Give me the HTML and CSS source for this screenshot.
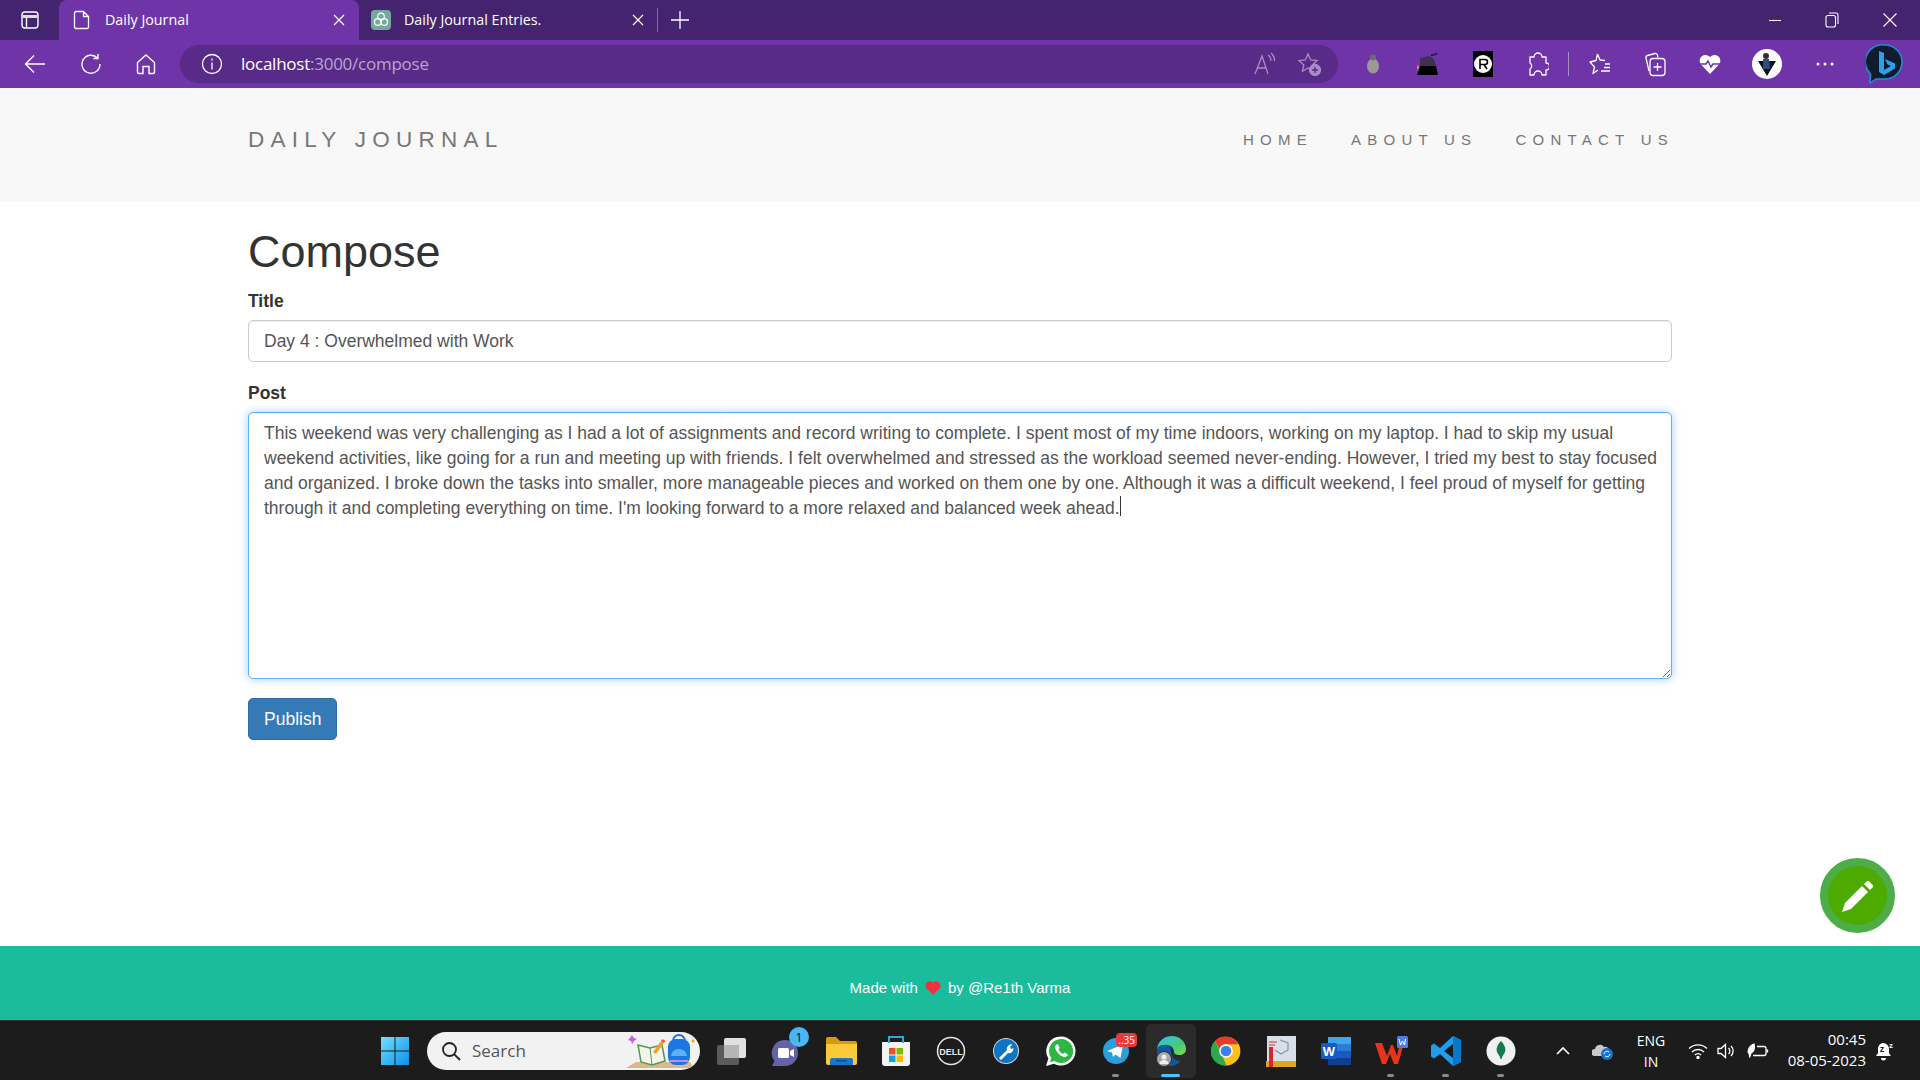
FILE: index.html
```html
<!DOCTYPE html>
<html lang="en">
<head>
    <meta charset="UTF-8">
    <meta name="viewport" content="width=device-width, initial-scale=1.0">
    <title>Daily Journal</title>
    <link rel="stylesheet" href="styles.css">
</head>
<body>
    <div class="tabstrip">
        <div class="strip-btn">
            <svg width="20" height="20" viewBox="0 0 20 20" fill="none" stroke="#fff" stroke-width="1.4"><rect x="2" y="2" width="16" height="16" rx="3"/><path d="M2.5 6.5h15" stroke-width="3" stroke="#ddd"/><path d="M6.5 7v10.5"/></svg>
        </div>
        <div class="tab tab-active">
            <svg class="tab-icon" width="18" height="20" viewBox="0 0 18 20" fill="none" stroke="#fff" stroke-width="1.3"><path d="M3 1.5h7.5L15.5 6.5V17a1.5 1.5 0 0 1-1.500 1.500H3A1.500 1.500 0 0 1 1.500 17V3A1.500 1.500 0 0 1 3 1.500zM10.500 1.500V6.500H15.500"/></svg>
            <span class="tab-title">Daily Journal</span>
            <svg class="tab-close" width="12" height="12" viewBox="0 0 12 12" stroke="#fff" stroke-width="1.200"><path d="M1 1l10 10M11 1L1 11"/></svg>
        </div>
        <div class="tab">
            <svg class="tab-icon" width="20" height="20" viewBox="0 0 20 20" fill="none"><rect width="20" height="20" rx="4" fill="#74aa9c"/><g stroke="#fff" stroke-width="1.200"><circle cx="10" cy="6.500" r="3.300"/><circle cx="6.800" cy="12" r="3.300"/><circle cx="13.200" cy="12" r="3.300"/></g></svg>
            <span class="tab-title">Daily Journal Entries.</span>
            <svg class="tab-close" width="12" height="12" viewBox="0 0 12 12" stroke="#fff" stroke-width="1.200"><path d="M1 1l10 10M11 1L1 11"/></svg>
        </div>
        <div class="tab-sep"></div>
        <svg class="new-tab" width="18" height="18" viewBox="0 0 18 18" stroke="#fff" stroke-width="1.300"><path d="M9 0v18M0 9h18"/></svg>
        <div class="win-controls">
            <svg width="14" height="14" viewBox="0 0 14 14" stroke="#fff" stroke-width="1.100"><path d="M1 7.500h12"/></svg>
            <svg width="14" height="16" viewBox="0 0 14 16" fill="none" stroke="#fff" stroke-width="1.100"><rect x="1" y="3.500" width="9.500" height="11.500" rx="2"/><path d="M4 1h7a2 2 0 0 1 2 2v9"/></svg>
            <svg width="16" height="16" viewBox="0 0 16 16" stroke="#fff" stroke-width="1.100"><path d="M1.500 1.500l13 13M14.500 1.500l-13 13"/></svg>
        </div>
    </div>

    <div class="toolbar">
        <div class="tool-nav">
            <svg width="22" height="20" viewBox="0 0 22 20" fill="none" stroke="#fff" stroke-width="1.400"><path d="M21 10H2M10 1.500L1.500 10l8.500 8.500"/></svg>
            <svg width="22" height="22" viewBox="0 0 22 22" fill="none" stroke="#fff" stroke-width="1.400"><path d="M17.500 5A9 9 0 1 0 20 11M18 1v4.500h-4.500"/></svg>
            <svg width="22" height="22" viewBox="0 0 22 22" fill="none" stroke="#fff" stroke-width="1.400"><path d="M11 2l8.500 7.500V19a1.500 1.500 0 0 1-1.500 1.500h-4v-7H8v7H4A1.500 1.500 0 0 1 2.500 19V9.500z"/></svg>
        </div>
        <div class="urlbar">
            <svg width="22" height="22" viewBox="0 0 22 22" fill="none" stroke="#fff" stroke-width="1.300"><circle cx="11" cy="11" r="9.500"/><path d="M11 9.500v7M11 5.500v2"/></svg>
            <span class="url"><b>localhost</b>:3000/compose</span>
            <svg class="url-read" width="24" height="24" viewBox="0 0 24 24" fill="none" stroke="#a98cc6" stroke-width="1.300"><path d="M3 22L10 4l6 18M5.500 16h9M16 3a7 7 0 0 1 3 6M19 1a10 10 0 0 1 3.500 8"/></svg>
            <svg class="url-fav" width="24" height="24" viewBox="0 0 24 24" fill="none" stroke="#a98cc6" stroke-width="1.300"><path d="M10 2l2.600 6 6.400.6-4.800 4.300 1.400 6.300L10 16l-5.600 3.200 1.400-6.300L1 8.600 7.400 8z"/><circle cx="17" cy="18" r="5.500" fill="#a98cc6"/><path d="M17 15v6M14 18h6" stroke="#572b87"/></svg>
        </div>
        <div class="ext-icons">
            <div class="ext-slot">
                <svg width="16" height="22" viewBox="0 0 16 22"><ellipse cx="8" cy="13" ry="7.500" rx="6" fill="#9a9a9a"/><circle cx="8" cy="4.500" r="3" fill="#6d6d6d"/></svg>
            </div>
            <div class="ext-slot">
                <svg width="22" height="26" viewBox="0 0 22 26"><path d="M2 15h17l2 9H0l2-5z" fill="#000"/><path d="M3 7l9-2 5 3 2 7H3z" fill="#3c3250"/><path d="M0 14l3 2-3 3z" fill="#f08a1d"/><path d="M14 4q3 1 6-2" stroke="#1c1c1c" stroke-width="1.500" fill="none"/></svg>
            </div>
            <div class="ext-slot">
                <svg width="20" height="26" viewBox="0 0 20 26"><rect width="20" height="26" fill="#000"/><circle cx="10" cy="13" r="9" fill="#fff"/><path d="M7 18V8.500h5a2.500 2.500 0 0 1 0 5H7M11 13.500l3 4.500" fill="none" stroke="#000" stroke-width="1.600"/></svg>
            </div>
            <div class="ext-slot">
                <svg width="22" height="26" viewBox="0 0 22 26" fill="none" stroke="#fff" stroke-width="1.300"><path d="M3 6h4a4 4 0 1 1 8 0h4v6a3.500 3.500 0 1 1 0 7v5H15a4 4 0 0 0-8 0H3v-6a3.500 3.500 0 0 0 0-6z" stroke-linejoin="round"/></svg>
            </div>
            <div class="tool-sep"></div>
            <div class="ext-slot">
                <svg width="22" height="24" viewBox="0 0 22 24" fill="none" stroke="#fff" stroke-width="1.300" stroke-linejoin="round"><path d="M8.500 2L11 8l5 .5M9 18l-5 3.500L5.500 15 1 10l6-1.500L8.500 2M16 12h5M15 15.500h6M12 19h9"/></svg>
            </div>
            <div class="ext-slot">
                <svg width="22" height="26" viewBox="0 0 22 26" fill="none" stroke="#fff" stroke-width="1.300"><path d="M5 20L2 7a2 2 0 0 1 1.500-2.500L11 2.500a2 2 0 0 1 2.400 1.500l.5 2.500"/><rect x="6" y="7.500" width="15" height="17" rx="3"/><path d="M13.500 12v8M9.500 16h8"/></svg>
            </div>
            <div class="ext-slot">
                <svg width="22" height="22" viewBox="0 0 22 22"><path d="M11 21L2 11.500A5.800 5.800 0 0 1 11 4a5.800 5.800 0 0 1 9 7.500z" fill="#fff"/><path d="M1 11h6l2-3 3 6 2-3h7" stroke="#6f35a8" stroke-width="1.400" fill="none"/></svg>
            </div>
            <div class="ext-slot ext-avatar">
                <svg width="30" height="30" viewBox="0 0 30 30"><circle cx="15" cy="15" r="15" fill="#fff"/><path d="M6 12h18l-9 15z" fill="#10131c"/><circle cx="14" cy="7" r="3" fill="#3a2a28"/><path d="M11 10h6l1 10h-7z" fill="#2d4d78"/></svg>
            </div>
            <div class="ext-slot ext-dots">
                <svg width="18" height="4" viewBox="0 0 18 4" fill="#fff"><circle cx="2" cy="2" r="1.500"/><circle cx="9" cy="2" r="1.500"/><circle cx="16" cy="2" r="1.500"/></svg>
            </div>
            <div class="ext-slot ext-bing">
                <svg width="38" height="40" viewBox="0 0 38 40"><path d="M19 1a17 17 0 0 1 0 34H10l-6 4 .500-9A17 17 0 0 1 19 1z" fill="#0e1c2e" stroke="#1c8fd8" stroke-width="1.500"/><path d="M13 7l5 2v17l7-4-3.500-1.500L19 15l10 4.500v5L18 31l-5-3z" fill="#2f9fe8"/></svg>
            </div>
        </div>
    </div>

    <nav class="navbar">
        <a class="brand" href="#">DAILY JOURNAL</a>
        <ul class="nav-links">
            <li><a href="#">HOME</a></li>
            <li><a href="#">ABOUT US</a></li>
            <li><a href="#">CONTACT US</a></li>
        </ul>
    </nav>

    <main class="container">
        <h1>Compose</h1>
        <form>
            <div class="form-group">
                <label for="postTitle">Title</label>
                <input type="text" id="postTitle" class="form-control" value="Day 4 : Overwhelmed with Work">
            </div>
            <div class="form-group post-group">
                <label for="postBody">Post</label>
                <textarea id="postBody" class="form-control post-body" rows="10">This weekend was very challenging as I had a lot of assignments and record writing to complete. I spent most of my time indoors, working on my laptop. I had to skip my usual weekend activities, like going for a run and meeting up with friends. I felt overwhelmed and stressed as the workload seemed never-ending. However, I tried my best to stay focused and organized. I broke down the tasks into smaller, more manageable pieces and worked on them one by one. Although it was a difficult weekend, I feel proud of myself for getting through it and completing everything on time. I'm looking forward to a more relaxed and balanced week ahead.</textarea>
                <span class="caret"></span>
            </div>
            <button type="button" class="btn-publish">Publish</button>
        </form>
    </main>

    <a class="fab" href="#">
        <svg width="34" height="34" viewBox="0 0 34 34" fill="#fff"><path d="M1 33l3-9L21 7l6 6L10 30z"/><path d="M23 5l2.500-2.500a2 2 0 0 1 2.800 0l3.200 3.200a2 2 0 0 1 0 2.800L29 11z"/></svg>
    </a>

    <footer class="footer">
        <span>Made with</span>
        <svg class="heart" width="16" height="15" viewBox="0 0 16 15"><path d="M8 15L1.200 8A4.300 4.300 0 0 1 8 2.800 4.300 4.300 0 0 1 14.800 8z" fill="#f0303c"/></svg>
        <span>by @Re1th Varma</span>
    </footer>

    <div class="taskbar">
        <div class="task-center">
            <div class="task-slot">
                <svg width="30" height="30" viewBox="0 0 30 30"><defs><linearGradient id="winBlue" x1="0" y1="0" x2="1" y2="1"><stop offset="0" stop-color="#6fe3fb"/><stop offset="1" stop-color="#0f8df0"/></linearGradient></defs><path d="M1 1h13.500v13.500H1zM15.500 1H29v13.500H15.500zM1 15.500h13.500V29H1zM15.500 15.500H29V29H15.500z" fill="url(#winBlue)"/></svg>
            </div>
            <div class="search-pill">
                <svg width="20" height="20" viewBox="0 0 20 20" fill="none" stroke="#222" stroke-width="1.800"><circle cx="8.500" cy="8.500" r="6.500"/><path d="M13.300 13.300L19 19"/></svg>
                <span>Search</span>
                <svg class="search-art" width="72" height="38" viewBox="0 0 72 38"><path d="M2 36l10-6h54l4 6z" fill="#dcb98a"/><path d="M14 13l12 3 12-3 3 16-13 4-11-3z" fill="#f4f4ea" stroke="#4f9a5a" stroke-width="1.500"/><path d="M26 16l2 17" stroke="#4f9a5a" stroke-width="1"/><path d="M29 20l8-11 3 2-8 11z" fill="#f0a030"/><path d="M37 9l1.500-2 3 2-1.500 2z" fill="#ee5a4a"/><path d="M6 6l2-3 2 3 3 1-3 2-2 3-1-3-3-1z" fill="#c55fe0"/><rect x="44" y="7" width="22" height="26" rx="8" fill="#1b78e0"/><path d="M49 9a6 6 0 0 1 12 0" stroke="#1b78e0" stroke-width="2" fill="none"/><path d="M47 24a8 7 0 0 1 16 0z" fill="#5fb0f5"/><rect x="46" y="28" width="18" height="2" fill="#c58af0"/><circle cx="69" cy="9" r="1.500" fill="#f5a623"/></svg>
            </div>
            <div class="task-slot">
                <svg width="30" height="28" viewBox="0 0 30 28"><rect x="1" y="8" width="22" height="20" rx="2" fill="#5b5b5b"/><rect x="8" y="1" width="22" height="20" rx="2" fill="#f2f2f2" opacity=".92"/><rect x="8" y="8" width="15" height="13" fill="#b5b5b5"/></svg>
            </div>
            <div class="task-slot">
                <svg width="34" height="34" viewBox="0 0 34 34"><path d="M16 6a13 13 0 0 1 0 26H3l2.500-5A13 13 0 0 1 16 6z" fill="#6264a7"/><rect x="9" y="14" width="11" height="10" rx="1.500" fill="#fff"/><path d="M21 17l4-2v8l-4-2z" fill="#fff"/></svg>
                <span class="badge-count">1</span>
            </div>
            <div class="task-slot">
                <svg width="32" height="28" viewBox="0 0 32 28"><path d="M1 2a2 2 0 0 1 2-2h8l4 4h15a2 2 0 0 1 2 2v4H1z" fill="#d99a0a"/><path d="M1 7h31v19a2 2 0 0 1-2 2H3a2 2 0 0 1-2-2z" fill="#fcc93a"/><path d="M5 28v-5a2 2 0 0 1 2-2h19a2 2 0 0 1 2 2v5z" fill="#1b78c8"/><rect x="11" y="23" width="11" height="1.500" fill="#0b4c8a"/></svg>
            </div>
            <div class="task-slot">
                <svg width="30" height="32" viewBox="0 0 30 32"><path d="M1 7h28v21a3 3 0 0 1-3 3H4a3 3 0 0 1-3-3z" fill="#f4f4f4"/><path d="M8 8V2h14v6" fill="none" stroke="#2ea7e0" stroke-width="2"/><rect x="8" y="13" width="6.500" height="6.500" fill="#f25022"/><rect x="15.500" y="13" width="6.500" height="6.500" fill="#7fba00"/><rect x="8" y="20.500" width="6.500" height="6.500" fill="#00a4ef"/><rect x="15.500" y="20.500" width="6.500" height="6.500" fill="#ffb900"/></svg>
            </div>
            <div class="task-slot">
                <svg width="30" height="30" viewBox="0 0 30 30"><circle cx="15" cy="15" r="13.500" fill="none" stroke="#e6e6e6" stroke-width="1.500"/><text x="15" y="18.500" font-size="9" font-weight="700" text-anchor="middle" fill="#e6e6e6" font-family="Liberation Sans, sans-serif">DELL</text></svg>
            </div>
            <div class="task-slot">
                <svg width="26" height="26" viewBox="0 0 26 26"><circle cx="13" cy="13" r="12.500" fill="#0a76c4" stroke="#c9c9c9" stroke-width="1.200"/><path d="M6 20l8-8a4.500 4.500 0 0 1 5.500-5.500L17 9l1 2 2-.5 .5-.5a4.500 4.500 0 0 1-5.500 5L8 22z" fill="#fff"/></svg>
            </div>
            <div class="task-slot">
                <svg width="32" height="32" viewBox="0 0 32 32"><path d="M16 1.500a14.500 14.500 0 0 1 0 29c-2.500 0-5-.7-7-1.800L1 31l2.400-7.500A14.500 14.500 0 0 1 16 1.500z" fill="#fff"/><path d="M16 4a12 12 0 1 1-6.500 22L5 27.300l1.300-4.400A12 12 0 0 1 16 4z" fill="#2bb741"/><path d="M11.500 9.500c-1.500 1-2 3 0 6.500s5 5.500 7.500 6c2 .3 3.700-1 4-2.500l-3.500-2-1.500 1.500c-1.500-.5-3.500-2.500-4.500-4.500l1.200-1.500-1.700-3.700z" fill="#fff"/></svg>
            </div>
            <div class="task-slot">
                <svg width="28" height="28" viewBox="0 0 28 28"><circle cx="14" cy="14" r="13" fill="#2a9fd9"/><path d="M5 14l16-6.500L18.500 21l-5-3.500-2.500 2.500-1-4.500z" fill="#fff"/></svg>
                <span class="badge-tg">..35</span>
                <span class="run-dot"></span>
            </div>
            <div class="task-slot task-active">
                <svg width="32" height="32" viewBox="0 0 32 32"><defs><linearGradient id="edgeGrad" x1="0" y1="0" x2="1" y2="1"><stop offset="0" stop-color="#35c1f1"/><stop offset=".6" stop-color="#45c97a"/><stop offset="1" stop-color="#7fe04f"/></linearGradient></defs><path d="M2 13C4 5 10 1 17 1c8 0 14 6 14 13 0 4-3 6-7 6-3 0-5-1-5-3 0-4-3-7-8-7-4 0-7 1-9 3z" fill="url(#edgeGrad)"/><path d="M2 13c3-3 7-4 10-3 3 1 4 3 4 6 0 6 4 10 10 10-3 3-7 5-11 5C7 31 1 23 2 13z" fill="#0c59a4"/><circle cx="9" cy="24" r="7.500" fill="#a8a8a8" stroke="#2b2b2b"/><circle cx="9" cy="22" r="2.500" fill="#eee"/><path d="M4.500 29a4.500 4 0 0 1 9 0z" fill="#eee"/></svg>
                <span class="run-bar"></span>
            </div>
            <div class="task-slot">
                <svg width="30" height="30" viewBox="0 0 48 48"><circle cx="24" cy="24" r="23" fill="#fbc116"/><path d="M24 1a23 23 0 0 1 20 12H24a11 11 0 0 0-10.500 7.500L6 8A23 23 0 0 1 24 1z" fill="#e33b2e"/><path d="M6 8l10.500 19 8 20A23 23 0 0 1 6 8z" fill="#2da94f"/><circle cx="24" cy="24" r="11" fill="#fff"/><circle cx="24" cy="24" r="8.500" fill="#3f7ee8"/></svg>
            </div>
            <div class="task-slot">
                <svg width="30" height="32" viewBox="0 0 30 32"><rect x="1" y="1" width="29" height="27" fill="#d8dfe6"/><path d="M14 5l8 3v7l-7 4-6-4" fill="none" stroke="#7f97ad" stroke-width="1.200"/><path d="M3 7h8M3 10h6" stroke="#c33" stroke-width="1"/><rect y="26" width="30" height="6" fill="#e5a21d"/><path d="M3 12h4v20H3z" fill="#d8262c"/></svg>
            </div>
            <div class="task-slot">
                <svg width="30" height="30" viewBox="0 0 30 30"><rect x="7" y="1" width="23" height="28" rx="1.500" fill="#2b7cd3"/><rect x="7" y="1" width="23" height="7" fill="#41a5ee"/><rect x="7" y="15" width="23" height="7" fill="#185abd"/><rect x="7" y="22" width="23" height="7" fill="#103f91"/><rect y="7" width="16" height="16" rx="1.500" fill="#185abd"/><text x="8" y="19.500" text-anchor="middle" font-size="13" font-weight="700" fill="#fff" font-family="Liberation Sans, sans-serif">W</text></svg>
            </div>
            <div class="task-slot">
                <svg width="34" height="30" viewBox="0 0 34 30"><path d="M1 7h7l5 13 4-11h2l4 11 3-13h4l-6 21h-4l-4-10-4 10h-4z" fill="#e8341c"/><rect x="23" y="0" width="11" height="12" rx="1.500" fill="#4b7ee8"/><path d="M25 3l1.500 6 2-4 2 4 1-6" stroke="#fff" stroke-width="1" fill="none"/></svg>
                <span class="run-dot"></span>
            </div>
            <div class="task-slot">
                <svg width="30" height="32" viewBox="0 0 30 32"><path d="M22 1l8 4v22l-8 4L9 19l-6 4.500L0 21.500V10.500L3 8.500 9 13z" fill="#1f9cf0"/><path d="M22 9v14l-9-7z" fill="#1a1a1a"/><path d="M22 1l8 4v22l-8 4z" fill="#0e76c8"/></svg>
                <span class="run-dot"></span>
            </div>
            <div class="task-slot">
                <svg width="30" height="30" viewBox="0 0 30 30"><circle cx="15" cy="15" r="14.500" fill="#f0f0f0"/><path d="M15 5c4 4 5 8 4 11-1 2.500-3 4-3.500 7h-1c-.5-3-2.500-4.500-3.500-7-1-3 0-7 4-11z" fill="#13794f"/></svg>
                <span class="run-dot"></span>
            </div>
        </div>
        <div class="tray">
            <svg class="tray-chevron" width="14" height="9" viewBox="0 0 14 9" fill="none" stroke="#fff" stroke-width="1.600"><path d="M1 8l6-6 6 6"/></svg>
            <svg class="tray-cloud" width="22" height="18" viewBox="0 0 22 18"><path d="M3 14a3 3 0 0 1 0-7 5 5 0 0 1 9-2 4 4 0 0 1 5 5v4z" fill="#c9c9c9"/><circle cx="15" cy="12" r="6" fill="#1672d6"/><path d="M12 12a3 3 0 0 1 5-2M18 12a3 3 0 0 1-5 2" fill="none" stroke="#fff" stroke-width="1"/></svg>
            <div class="tray-lang">ENG<br>IN</div>
            <svg class="tray-wifi" width="20" height="16" viewBox="0 0 20 16" fill="none" stroke="#fff" stroke-width="1.400"><path d="M1 5.500a13 13 0 0 1 18 0M4 9a8.500 8.500 0 0 1 12 0M7 12a4 4 0 0 1 6 0"/><circle cx="10" cy="14.500" r="1" fill="#fff"/></svg>
            <svg class="tray-sound" width="20" height="16" viewBox="0 0 20 16" fill="none" stroke="#fff" stroke-width="1.300"><path d="M1 5.500h3L8.500 1.500v13L4 10.500H1zM11.500 5a4 4 0 0 1 0 6M14 3a7 7 0 0 1 0 10"/></svg>
            <svg class="tray-battery" width="22" height="16" viewBox="0 0 22 16" fill="none" stroke="#fff" stroke-width="1.300"><path d="M10 3.500h7a2 2 0 0 1 2 2v5a2 2 0 0 1-2 2H6M20.500 6.500v3"/><path d="M1 9.500C1 5.500 3.500 2 7 1c1 4 0 8-3 9l-1.500 4.500" fill="#fff"/></svg>
            <div class="tray-clock">00:45<br>08-05-2023</div>
            <svg class="tray-bell" width="20" height="20" viewBox="0 0 20 20" fill="#fff"><path d="M8 2a6 6 0 0 0-5 6v4l-2 3h15l-2-3V8a6 6 0 0 0-6-6z"/><path d="M6 17h5a2.500 2.500 0 0 1-5 0z"/><text x="7" y="11" font-size="9" font-weight="700" text-anchor="middle" fill="#1c1c1c" font-family="Liberation Sans, sans-serif">z</text><text x="16" y="7" font-size="8" font-weight="700" text-anchor="middle" font-family="Liberation Sans, sans-serif">z</text></svg>
        </div>
    </div>
</body>
</html>
```

FILE: styles.css
```css
* {
    box-sizing: border-box;
}
html, body {
    height: 100%;
}
body {
    margin: 0;
    height: 1080px;
    overflow: hidden;
    display: flex;
    flex-direction: column;
    font-family: "Liberation Sans", Arial, sans-serif;
    font-size: 17.5px;
    line-height: 25px;
    color: #333;
    background: #fff;
}
a {
    text-decoration: none;
    color: inherit;
}

/* browser chrome */
.tabstrip {
    height: 40px;
    flex: none;
    display: flex;
    align-items: center;
    background: #45246f;
    color: #fff;
    font-family: "Open Sans", "Noto Sans", sans-serif;
    font-size: 14.3px;
}
.strip-btn {
    width: 59px;
    height: 40px;
    display: flex;
    align-items: center;
    justify-content: center;
}
.tab {
    width: 300px;
    height: 40px;
    display: flex;
    align-items: center;
    padding: 0 15px 0 12px;
}
.tab-active {
    padding-left: 14px;
    padding-right: 14px;
    background: #6f35a8;
    border-radius: 8px 8px 0 0;
}
.tab-icon {
    flex: none;
}
.tab-title {
    flex: 1;
    margin-left: 13px;
    padding-bottom: 2px;
}
.tab-active .tab-title {
    margin-left: 14px;
}
.tab-sep {
    width: 1px;
    height: 24px;
    margin-left: -2px;
    background: #8b6aa8;
}
.new-tab {
    margin-left: 13px;
}
.win-controls {
    margin-left: auto;
    width: 173px;
    padding: 0 22px 0 21px;
    display: flex;
    justify-content: space-between;
    align-items: center;
}

.toolbar {
    height: 48px;
    flex: none;
    display: flex;
    align-items: center;
    background: #6f35a8;
    color: #fff;
    font-family: "Open Sans", "Noto Sans", sans-serif;
}
.tool-nav {
    width: 180px;
    padding: 0 23px 0 24px;
    display: flex;
    justify-content: space-between;
    align-items: center;
}
.urlbar {
    width: 1158px;
    height: 38px;
    flex: none;
    display: flex;
    align-items: center;
    padding: 0 16px 0 21px;
    border-radius: 19px;
    background: #572b87;
}
.url {
    flex: 1;
    margin-left: 18px;
    padding-bottom: 2px;
    font-size: 17px;
    letter-spacing: -0.25px;
    color: #b9a5d0;
}
.url b {
    font-weight: 400;
    color: #fff;
}
.url-read {
    margin-right: 22px;
}
.ext-icons {
    flex: 1;
    display: flex;
    align-items: center;
    padding-left: 7px;
}
.ext-slot {
    width: 55px;
    flex: none;
    display: flex;
    align-items: center;
    justify-content: center;
}
.tool-sep {
    width: 1px;
    height: 24px;
    margin: 0 3px 0 3px;
    background: #a98cc6;
}
.ext-avatar {
    width: 60px;
}
.ext-dots {
    width: 55px;
}
.ext-bing {
    width: 66px;
}

/* page */
.navbar {
    height: 114px;
    flex: none;
    display: flex;
    justify-content: space-between;
    align-items: flex-start;
    padding: 0 248px;
    background: #f8f8f8;
}
.brand {
    margin-top: 38px;
    font-size: 22.500px;
    line-height: 27px;
    letter-spacing: 6.250px;
    color: #777;
}
.nav-links {
    list-style: none;
    display: flex;
    gap: 38px;
    margin: 38px -2px 0 0;
    padding: 0;
    font-size: 15px;
    line-height: 27px;
    letter-spacing: 6.250px;
    color: #777;
}
.container {
    flex: 1;
    padding: 0 248px;
}
h1 {
    margin: 25px 0 12px;
    font-size: 45px;
    line-height: 50px;
    font-weight: 500;
}
.form-group {
    margin-bottom: 19px;
}
.post-group {
    position: relative;
}
label {
    display: block;
    margin-bottom: 6px;
    font-weight: 700;
    font-size: 17.500px;
}
.form-control {
    display: block;
    width: 100%;
    height: 42px;
    padding: 7px 15px;
    font-family: inherit;
    font-size: 17.500px;
    line-height: 25px;
    color: #555;
    background: #fff;
    border: 1px solid #ccc;
    border-radius: 5px;
    box-shadow: inset 0 1px 1px rgba(0,0,0,.075);
    outline: none;
}
.post-body {
    height: 267px;
    padding: 8px 12px 7px 15px;
    resize: vertical;
    border-color: #66afe9;
    box-shadow: inset 0 1px 1px rgba(0,0,0,.075), 0 0 10px rgba(102,175,233,.6);
}
.caret {
    position: absolute;
    left: 872px;
    top: 115px;
    width: 1px;
    height: 20px;
    background: #333;
}
.btn-publish {
    display: block;
    height: 42px;
    padding: 0 15px;
    font-family: inherit;
    font-size: 17.500px;
    color: #fff;
    background: #337ab7;
    border: 1px solid #2e6da4;
    border-radius: 5px;
}
.fab {
    position: absolute;
    left: 1820px;
    top: 858px;
    width: 75px;
    height: 75px;
    display: flex;
    align-items: center;
    justify-content: center;
    border-radius: 50%;
    background: #4caa00;
    border: 8px solid #4dae47;
}
.footer {
    height: 74px;
    flex: none;
    display: flex;
    align-items: center;
    justify-content: center;
    gap: 7px;
    padding-top: 8px;
    font-size: 15px;
    color: #fff;
    background: #1abc9c;
}

/* windows taskbar */
.taskbar {
    height: 60px;
    flex: none;
    position: relative;
    display: flex;
    align-items: center;
    background: #1c1c1c;
    border-top: 1px solid #333;
}
.task-center {
    display: flex;
    align-items: center;
    margin-left: 367px;
}
.task-slot {
    position: relative;
    width: 55px;
    height: 54px;
    flex: none;
    display: flex;
    align-items: center;
    justify-content: center;
}
.task-active {
    width: 50px;
    margin: 0 2.500px;
    background: #2b2b2b;
    border-radius: 5px;
}
.task-active .run-bar {
    left: 15.500px;
}
.search-pill {
    width: 273px;
    height: 38px;
    flex: none;
    display: flex;
    align-items: center;
    margin: 0 3px 0 5px;
    padding-left: 14px;
    border-radius: 19px;
    background: #f2f2f2;
    color: #555;
    font-family: "Open Sans", "Noto Sans", sans-serif;
    font-size: 17px;
    overflow: hidden;
}
.search-pill span {
    flex: 1;
    margin-left: 11px;
}
.search-art {
    margin-right: 4px;
}
.badge-count {
    position: absolute;
    top: 3px;
    right: 4px;
    width: 20px;
    height: 20px;
    border-radius: 50%;
    background: #4cb5f5;
    color: #111;
    font-family: "Open Sans", sans-serif;
    font-size: 13px;
    line-height: 20px;
    text-align: center;
}
.badge-tg {
    position: absolute;
    top: 9px;
    right: 6px;
    padding: 0 2px;
    border-radius: 4px;
    background: #e83a3a;
    color: #fff;
    font-family: "Open Sans", sans-serif;
    font-size: 10px;
    line-height: 14px;
}
.run-dot {
    position: absolute;
    bottom: 1px;
    left: 24px;
    width: 7px;
    height: 3px;
    border-radius: 2px;
    background: #8a8a8a;
}
.run-bar {
    position: absolute;
    bottom: 1px;
    left: 18px;
    width: 19px;
    height: 3px;
    border-radius: 2px;
    background: #4cc2ff;
}
.tray {
    position: absolute;
    right: 0;
    top: 0;
    width: 364px;
    height: 59px;
    display: flex;
    align-items: center;
    color: #fff;
    font-family: "Open Sans", "Noto Sans", sans-serif;
    font-size: 14px;
    line-height: 21px;
}
.tray-chevron {
    margin-left: 0;
}
.tray-cloud {
    margin-left: 22px;
}
.tray-lang {
    width: 40px;
    margin-left: 17px;
    text-align: center;
}
.tray-wifi {
    margin-left: 17px;
}
.tray-sound {
    margin-left: 9px;
}
.tray-battery {
    margin-left: 10px;
}
.tray-clock {
    width: 84px;
    margin-left: 13px;
    padding-bottom: 2px;
    font-size: 15px;
    text-align: right;
    white-space: nowrap;
}
.tray-bell {
    margin-left: 9px;
}
```
